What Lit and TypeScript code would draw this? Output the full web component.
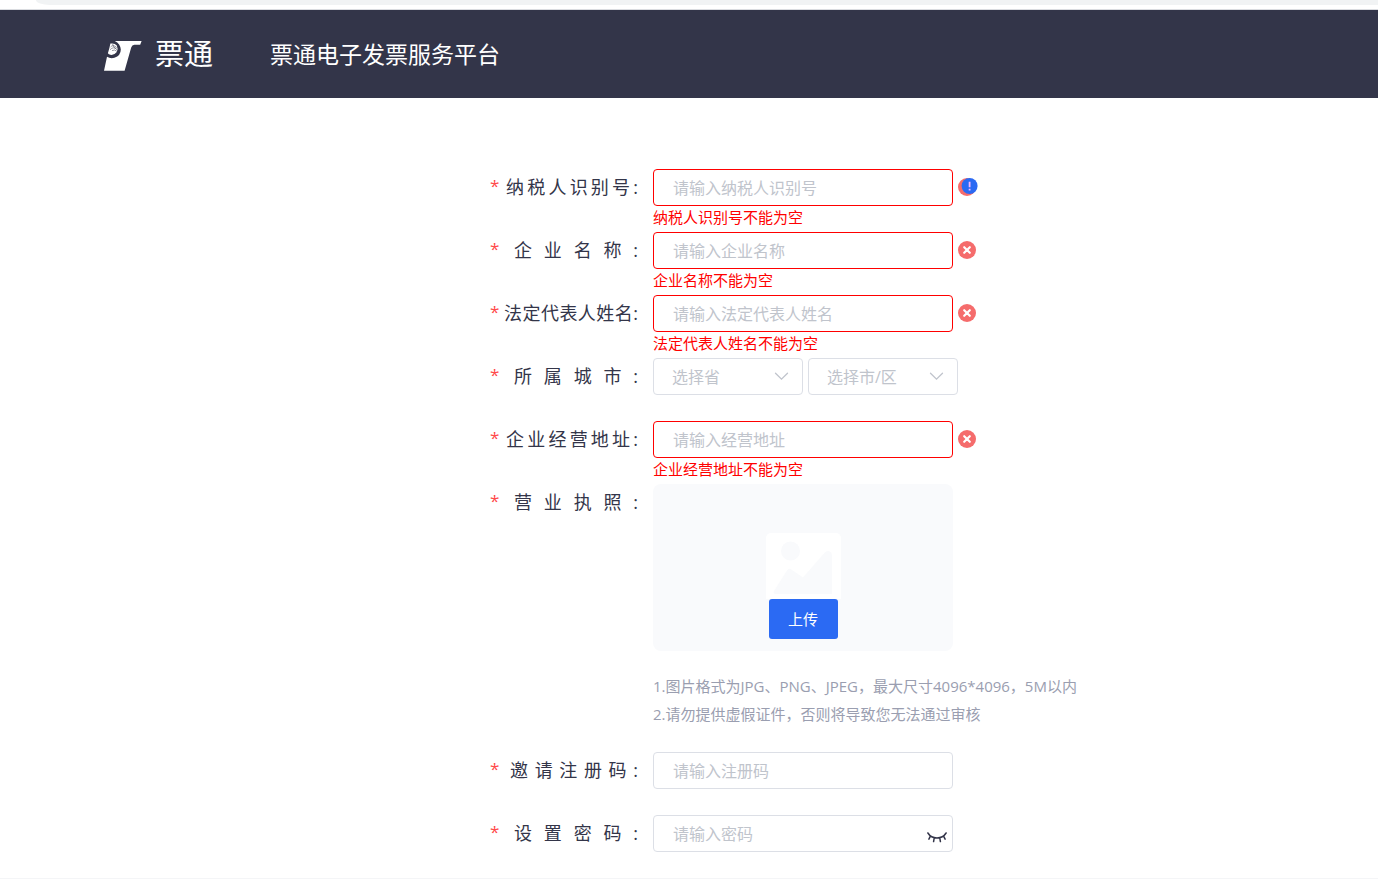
import { LitElement, html, css, nothing } from "lit";
import { customElement, property } from "lit/decorators.js";

const FONT = css`"Open Sans", "Noto Sans CJK SC", sans-serif`;

interface Field {
  id: string;
  label: string;
  placeholder: string;
  error?: string;
  hint?: boolean;
  password?: boolean;
}

const COMPANY: Field[] = [
  { id: "tax", label: "纳税人识别号", placeholder: "请输入纳税人识别号", error: "纳税人识别号不能为空", hint: true },
  { id: "company", label: "企业名称", placeholder: "请输入企业名称", error: "企业名称不能为空" },
  { id: "legal", label: "法定代表人姓名", placeholder: "请输入法定代表人姓名", error: "法定代表人姓名不能为空" },
];
const ADDRESS: Field = { id: "address", label: "企业经营地址", placeholder: "请输入经营地址", error: "企业经营地址不能为空" };
const ACCOUNT: Field[] = [
  { id: "invite", label: "邀请注册码", placeholder: "请输入注册码" },
  { id: "password", label: "设置密码", placeholder: "请输入密码", password: true },
];

@customElement("site-header")
export class SiteHeader extends LitElement {
  static styles = css`
    :host {
      display: block;
      background: #333549;
      color: #fff;
      font-family: ${FONT};
    }
    .inner {
      display: flex;
      align-items: center;
      max-width: 1170px;
      height: 88px;
      margin: 0 auto;
    }
    .brand {
      display: flex;
      align-items: center;
      gap: 13px;
      color: inherit;
      text-decoration: none;
    }
    .mark {
      display: block;
    }
    .name {
      font-size: 29px;
      line-height: 40px;
      font-weight: 400;
    }
    .title {
      margin: 0 0 0 57px;
      font-size: 23px;
      line-height: 40px;
      font-weight: 400;
    }
  `;

  render() {
    return html`
      <div class="inner">
        <a class="brand" href="#">
          <svg class="mark" width="38" height="34" viewBox="0 -3 38 34" aria-hidden="true">
            <path
              fill="#fff"
              d="M10.8 1 H37.6 L36.2 4.8 H30.4 Q28 4.8 27.2 7.4 L20.6 30.8 H0 L3 16.8 Q6.2 18.8 10.4 17.8 Q16.8 15.8 16.8 9.6 Q16.4 3.8 10.8 1Z"
            />
            <path
              fill="#fff"
              d="M6.4 3.6 Q10.6 2.8 12.8 5.6 Q14.4 9 12.8 12 Q10.2 15.4 6.4 14.8 Q4.6 14.4 3.9 13.2 Q5.6 8 6.4 3.6Z"
            />
            <g fill="none" stroke="#333549" stroke-width=".5">
              <path d="M6.6 7 Q9 4 12.8 7.6 M6 9.8 Q9.4 5.8 13.2 9.8 M8 10.6 Q11 9 12.8 11.4 M8.6 4 Q8.8 7 12.4 9" />
            </g>
          </svg>
          <span class="name">票通</span>
        </a>
        <h1 class="title">票通电子发票服务平台</h1>
      </div>
    `;
  }
}

@customElement("form-row")
export class FormRow extends LitElement {
  @property({ attribute: false }) field!: Field;

  static styles = css`
    :host {
      display: block;
      font-family: ${FONT};
    }
    .row {
      display: grid;
      grid-template-columns: 12px 136px 1fr;
    }
    .star {
      color: #ff4949;
      font-size: 17px;
      font-weight: 400;
      line-height: 34px;
    }
    .label {
      justify-self: end;
      color: #333549;
      font-size: 18px;
      font-weight: 400;
      line-height: 37px;
      white-space: nowrap;
      text-align: justify;
      text-align-last: justify;
    }
    .chars-4 {
      width: 124px;
    }
    .chars-5 {
      width: 128px;
    }
    .chars-6 {
      width: 132px;
    }
    .chars-7 {
      width: 134px;
    }
    .field {
      padding-left: 15px;
    }
    .line {
      display: flex;
      align-items: center;
      gap: 5px;
    }
    .box {
      box-sizing: border-box;
      display: flex;
      align-items: center;
      width: 300px;
      height: 37px;
      padding: 0 5px 0 19px;
      border: 1px solid #dcdfe6;
      border-radius: 4px;
      background: #fff;
    }
    .invalid {
      border-color: #f00;
    }
    .input {
      flex: 1;
      min-width: 0;
      padding: 0;
      border: 0;
      outline: 0;
      background: none;
      color: #333549;
      font: 400 16px/24px ${FONT};
    }
    .input::placeholder {
      color: #c0c4cc;
      opacity: 1;
    }
    .eye {
      display: flex;
      padding: 8px 0 0;
      border: 0;
      background: none;
    }
    .message {
      height: 26px;
      color: #f00;
      font-size: 15px;
      font-weight: 400;
      line-height: 22px;
      white-space: nowrap;
    }
    .pair {
      display: flex;
      gap: 5px;
    }
    .pick {
      display: grid;
      width: 150px;
      align-items: center;
    }
    .select,
    .chevron {
      grid-area: 1 / 1;
    }
    .select {
      box-sizing: border-box;
      width: 100%;
      height: 37px;
      padding: 0 36px 0 18px;
      appearance: none;
      border: 1px solid #dcdfe6;
      border-radius: 4px;
      background: #fff;
      color: #c0c4cc;
      font: 400 16px/24px ${FONT};
    }
    .chevron {
      justify-self: end;
      margin-right: 14px;
      pointer-events: none;
    }
    .upload {
      display: flex;
      flex-direction: column;
      align-items: center;
      box-sizing: border-box;
      width: 300px;
      padding: 49px 0 12px;
      border-radius: 8px;
      background: #f9fafc;
    }
    .picture {
      display: block;
    }
    .send {
      width: 69px;
      height: 40px;
      padding: 0;
      border: 0;
      border-radius: 3px;
      background: #2b6af3;
      color: #fff;
      font: 400 15px/40px ${FONT};
    }
    .notes {
      margin: 21px 0 24px;
      padding: 0;
      list-style: none;
      color: #9a9eb0;
      font-size: 15px;
      line-height: 28px;
      white-space: nowrap;
    }
  `;

  private badge(hint?: boolean) {
    return html`
      <svg width="20" height="20" viewBox="0 0 20 20" role="img" aria-label="error">
        <circle cx="9" cy="9" r="9" fill="#f56c6c" />
        ${hint
          ? html`<svg width="20" height="20" viewBox="0 0 20 20">
              <circle cx="11.6" cy="8" r="8" fill="#2b6af3" />
              <path d="M11.6 3.8v5.4M11.6 10.8v1.6" stroke="#f3b6ff" stroke-width="1.8" />
            </svg>`
          : html`<svg width="20" height="20" viewBox="0 0 20 20">
              <path d="M6.2 6.2l5.6 5.6M11.8 6.2l-5.6 5.6" stroke="#fff" stroke-width="2.2" stroke-linecap="round" />
            </svg>`}
      </svg>
    `;
  }

  protected frame(id: string, label: string, content: unknown) {
    return html`
      <div class="row">
        <span class="star" aria-hidden="true">*</span>
        <label class="label chars-${label.length}" for=${id}>${label}:</label>
        <div class="field">${content}</div>
      </div>
    `;
  }

  render() {
    const f = this.field;
    return this.frame(
      f.id,
      f.label,
      html`
        <div class="line">
          <div class="box ${f.error ? "invalid" : ""}">
            <input
              class="input"
              id=${f.id}
              type=${f.password ? "password" : "text"}
              placeholder=${f.placeholder}
            />
            ${f.password
              ? html`<button class="eye" type="button" aria-label="显示密码">
                  <svg width="20" height="11" viewBox="0 0 20 11" fill="none" stroke="#333549" stroke-width="1.5" stroke-linecap="round">
                    <path d="M.9 1 Q4 6 10 6 Q16 6 19.1 1M3.4 4.2l-1.5 3M7.2 6l-.6 3.6M12.8 6l.6 3.6M16.6 4.2l1.5 3" />
                  </svg>
                </button>`
              : nothing}
          </div>
          ${f.error ? this.badge(f.hint) : nothing}
        </div>
        <div class="message">${f.error ?? nothing}</div>
      `
    );
  }
}

@customElement("city-row")
export class CityRow extends FormRow {
  private pick(id: string, text: string) {
    return html`
      <div class="pick">
        <select class="select" id=${id} aria-label=${text}>
          <option>${text}</option>
        </select>
        <svg class="chevron" width="15" height="9" viewBox="0 0 15 9" aria-hidden="true">
          <path d="M1.5 1.2l6 6 6-6" fill="none" stroke="#c0c4cc" stroke-width="1.3" stroke-linecap="round" />
        </svg>
      </div>
    `;
  }

  render() {
    return this.frame(
      "province",
      "所属城市",
      html`
        <div class="pair">${this.pick("province", "选择省")}${this.pick("city", "选择市/区")}</div>
        <div class="message"></div>
      `
    );
  }
}

@customElement("license-row")
export class LicenseRow extends FormRow {
  render() {
    return this.frame(
      "license",
      "营业执照",
      html`
        <div class="upload">
          <svg class="picture" width="75" height="66" viewBox="0 0 75 66" aria-hidden="true">
            <rect width="75" height="75" rx="5" fill="#fff" />
            <circle cx="24.5" cy="18" r="9.5" fill="#f9fafc" />
            <path
              fill="#f9fafc"
              d="M8 58 L21 37.5 Q23 34.5 26 37 L37 44.5 L58 20.5 Q61 17 64 18.5 Q66 19.5 66 23 V61 H10 Q6.5 61 8 58Z"
            />
          </svg>
          <button class="send" id="license" type="button">上传</button>
        </div>
        <ul class="notes">
          <li>1.图片格式为JPG、PNG、JPEG，最大尺寸4096*4096，5M以内</li>
          <li>2.请勿提供虚假证件，否则将导致您无法通过审核</li>
        </ul>
      `
    );
  }
}

@customElement("app-root")
export class AppRoot extends LitElement {
  static styles = css`
    :host {
      display: block;
      background: #fff;
    }
    .strip {
      height: 9px;
      padding-left: 36px;
      border-bottom: 1px solid #dadce0;
    }
    .bar {
      height: 5px;
      border-bottom-left-radius: 14px 5px;
      background: #f1f3f4;
    }
    .content {
      max-width: 1170px;
      margin: 0 auto;
    }
    .form {
      margin-left: 386px;
      padding-top: 71px;
    }
    .end {
      height: 1px;
      background: #f4f5f7;
    }
  `;

  render() {
    return html`
      <div class="strip"><div class="bar"></div></div>
      <site-header></site-header>
      <main class="content">
        <form class="form">
          ${COMPANY.map((f) => html`<form-row .field=${f}></form-row>`)}
          <city-row></city-row>
          <form-row .field=${ADDRESS}></form-row>
          <license-row></license-row>
          ${ACCOUNT.map((f) => html`<form-row .field=${f}></form-row>`)}
        </form>
      </main>
      <div class="end"></div>
    `;
  }
}
